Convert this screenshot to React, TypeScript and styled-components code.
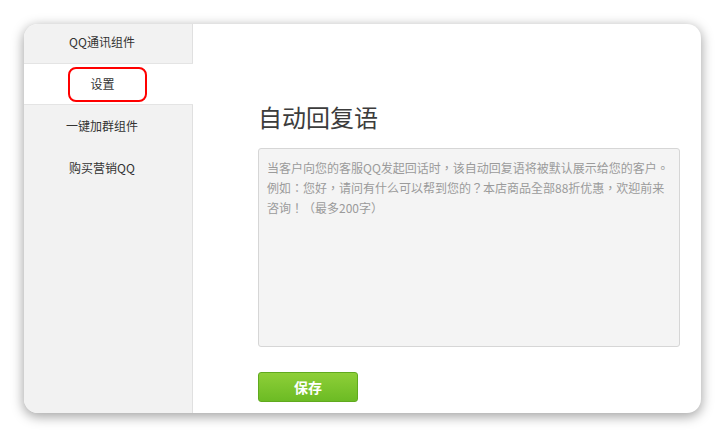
import styled, { createGlobalStyle } from 'styled-components';

const GlobalStyle = createGlobalStyle`
    html, body {
        margin: 0;
        padding: 0;
        background: rgb(255, 255, 255);
    }
    body {
        font-family: "Noto Sans CJK SC", "Noto Sans", sans-serif;
    }
    * {
        box-sizing: border-box;
    }
`

const menu = [
    { label: 'QQ通讯组件', active: false },
    { label: '设置', active: true },
    { label: '一键加群组件', active: false },
    { label: '购买营销QQ', active: false },
]

function App() {
    return (
        <>
            <GlobalStyle/>
            <StyledPage>
                <StyledCard>
                    <StyledSidebar>
                        {menu.map(item => (
                            <StyledMenuItem key={item.label} active={item.active}>
                                {item.label}
                                {item.active && <StyledMarker/>}
                            </StyledMenuItem>
                        ))}
                    </StyledSidebar>
                    <StyledMain>
                        <StyledTitle>自动回复语</StyledTitle>
                        <StyledTextarea
                            placeholder="当客户向您的客服QQ发起回话时，该自动回复语将被默认展示给您的客户。例如：您好，请问有什么可以帮到您的？本店商品全部88折优惠，欢迎前来咨询！（最多200字）"
                        />
                        <StyledSaveBtn>保存</StyledSaveBtn>
                    </StyledMain>
                </StyledCard>
            </StyledPage>
        </>
    );
}

export default App;

const StyledPage = styled.div`
    padding: 24px;
    width: 725px;
    height: 437px;
`

const StyledCard = styled.div`
    display: flex;
    width: 677px;
    height: 389px;
    border-radius: 14px;
    overflow: hidden;
    background: rgb(255, 255, 255);
    box-shadow: 0px 3px 12px 1px rgba(0, 0, 0, 0.35);
`

const StyledSidebar = styled.div`
    width: 169px;
    flex-shrink: 0;
    background: rgb(242, 242, 242);
    border-right: 1px solid rgb(224, 224, 224);
`

type StyledMenuItemPropsType = {
    active?: boolean
}

const StyledMenuItem = styled.div<StyledMenuItemPropsType>`
    position: relative;
    height: 42px;
    line-height: ${props => props.active ? '40px' : '42px'};
    padding-right: 12px;
    text-align: center;
    font-size: 12px;
    color: rgb(51, 51, 51);
    background: ${props => props.active ? 'rgb(255, 255, 255)' : 'transparent'};
    border-top: ${props => props.active ? '1px solid rgb(228, 228, 228)' : 'none'};
    border-bottom: ${props => props.active ? '1px solid rgb(228, 228, 228)' : 'none'};
    margin-right: ${props => props.active ? '-1px' : '0'};

    &:first-child {
        height: 39px;
        line-height: 36px;
    }
`

const StyledMarker = styled.span`
    position: absolute;
    left: 44px;
    top: 3px;
    width: 79px;
    height: 35px;
    border: 2px solid rgb(255, 0, 0);
    border-radius: 8px;
`

const StyledMain = styled.div`
    flex: 1;
    display: flex;
    flex-direction: column;
    align-items: flex-start;
    padding: 76px 21px 0 65px;
`

const StyledTitle = styled.h2`
    margin: 0 0 15px;
    font-size: 24px;
    font-weight: 400;
    line-height: 33px;
    color: rgb(60, 60, 60);
`

const StyledTextarea = styled.textarea`
    width: 422px;
    height: 199px;
    padding: 9px 8px;
    margin: 0 0 25px;
    resize: none;
    outline: none;
    font-family: "Noto Sans CJK TC", "Noto Sans CJK SC", sans-serif;
    font-size: 12px;
    line-height: 20px;
    color: rgb(120, 120, 120);
    background: rgb(244, 244, 244);
    border: 1px solid rgb(214, 214, 214);
    border-radius: 3px;

    &::placeholder {
        color: rgb(155, 155, 155);
        opacity: 1;
    }
`

const StyledSaveBtn = styled.button`
    width: 100px;
    height: 30px;
    padding: 0;
    font-family: "Noto Sans CJK SC", "Noto Sans", sans-serif;
    font-size: 14px;
    font-weight: 700;
    color: rgb(255, 255, 255);
    background: linear-gradient(to bottom, rgb(142, 207, 56), rgb(108, 187, 36));
    border: 1px solid rgb(96, 170, 30);
    border-radius: 3px;
    cursor: pointer;
`
